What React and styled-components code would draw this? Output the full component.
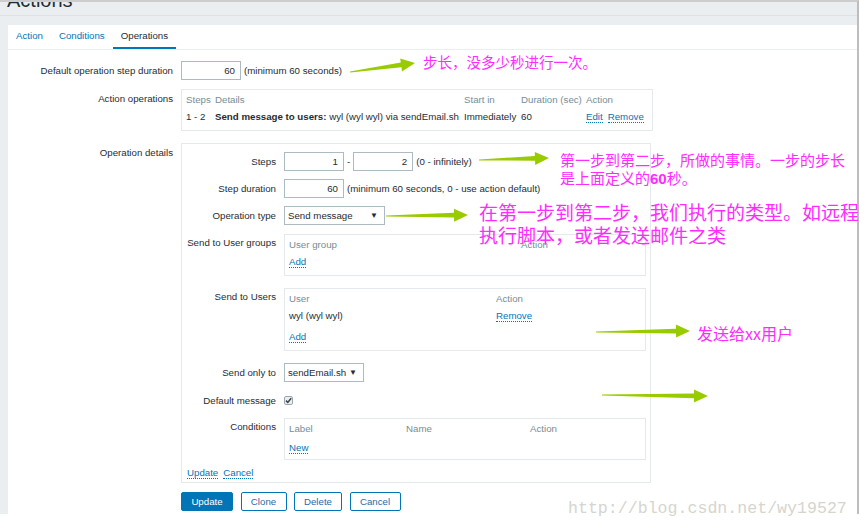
import React from "react";
import styled, { createGlobalStyle } from "styled-components";

const GlobalStyle = createGlobalStyle`
  html, body {
    margin: 0;
    padding: 0;
    background: #ffffff;
  }
  body {
    font-family: "Liberation Sans", Arial, sans-serif;
    font-size: 9.7px;
    color: #1f2c33;
  }
`;

const Frame = styled.div`
  position: relative;
  width: 859px;
  height: 529px;
  overflow: hidden;
`;

const Page = styled.div`
  box-sizing: border-box;
  width: 859px;
  height: 514px;
  background: #ebeef0;
  border-top: 2px solid #cdcdcd;
  border-right: 2px solid #bdbdbd;
  display: flex;
  flex-direction: column;
`;

const Header = styled.div`
  height: 13px;
  border-bottom: 1px solid #dde2e5;
  padding-left: 7px;
  overflow: hidden;
  margin-bottom: 9px;
`;

const Title = styled.h1`
  margin: -12px 0 0 0;
  font-size: 20px;
  line-height: 20px;
  font-weight: normal;
  color: #1f2c33;
`;

const Panel = styled.div`
  flex: 1;
  margin-left: 8px;
  background: #ffffff;
`;

const TabBar = styled.div`
  display: flex;
  height: 24px;
  border-bottom: 1px solid #ebeef0;
`;

const Tab = styled.div`
  padding: 0 8px;
  line-height: 22px;
  border-bottom: 2px solid ${(p) => (p.$active ? "#0275b8" : "transparent")};
  color: ${(p) => (p.$active ? "#1f2c33" : "#0275b8")};
`;

const Form = styled.div`
  padding-top: 11px;
  display: flex;
  flex-direction: column;
`;

const FormRow = styled.div`
  display: grid;
  grid-template-columns: ${(p) => p.$label || "165px"} 1fr;
  column-gap: 8px;
  margin-top: ${(p) => p.$mt || 0}px;
  align-items: start;
`;

const Label = styled.div`
  text-align: right;
  white-space: nowrap;
  line-height: ${(p) => (p.$box ? "14px" : "19px")};
  padding-top: ${(p) => (p.$box ? `${p.$top || 2}px` : "0")};
`;

const Field = styled.div`
  display: flex;
  align-items: center;
  gap: 3px;
  min-height: 19px;
`;

const TextInput = styled.div`
  box-sizing: border-box;
  width: ${(p) => p.$w || 60}px;
  height: 19px;
  border: 1px solid #acbbc2;
  background: #ffffff;
  text-align: right;
  padding-right: 5px;
  line-height: 17px;
`;

const Hint = styled.span`
  color: #1f2c33;
  white-space: nowrap;
`;

const Select = styled.div`
  box-sizing: border-box;
  width: ${(p) => p.$w}px;
  height: 19px;
  border: 1px solid #acbbc2;
  background: #ffffff;
  display: flex;
  align-items: center;
  justify-content: space-between;
  padding: 0 6px 0 3px;
  white-space: nowrap;

  span:last-child {
    font-size: 8px;
    color: #1f2c33;
  }
`;

const ListBox = styled.div`
  box-sizing: border-box;
  width: ${(p) => p.$w}px;
  border: 1px solid #e5e9eb;
  padding: ${(p) => p.$pad || "1px 4px 5px"};
`;

const ListGrid = styled.div`
  display: grid;
  grid-template-columns: ${(p) => p.$cols};
  grid-auto-rows: 17px;
  align-items: center;
  white-space: nowrap;
`;

const HeadCell = styled.div`
  color: #768d99;
`;

const Cell = styled.div`
  color: #1f2c33;

  b {
    font-weight: bold;
  }
`;

const LinkText = styled.span`
  color: #0275b8;
  border-bottom: 1px dotted #0275b8;
  line-height: 11px;
  display: inline-block;
  margin-right: ${(p) => p.$mr || 0}px;
`;

const ExtraRow = styled.div`
  height: 17px;
  display: flex;
  align-items: center;
  margin-top: ${(p) => p.$mt || 0}px;
`;

const DetailsBox = styled.div`
  box-sizing: border-box;
  width: 470px;
  border: 1px solid #e5e9eb;
  padding: 8px 5px 3px;
  display: flex;
  flex-direction: column;
`;

const FootLinks = styled.div`
  margin-top: 7px;
  line-height: 14px;
  display: flex;
  align-items: center;
`;

const Checkbox = styled.span`
  box-sizing: border-box;
  width: 9px;
  height: 9px;
  border: 1px solid #9aa7ae;
  border-radius: 2px;
  background: #eceeef;
  display: inline-flex;
  align-items: center;
  justify-content: center;
`;

const ButtonRow = styled.div`
  display: flex;
  gap: 7.5px;
`;

const Button = styled.div`
  box-sizing: border-box;
  width: ${(p) => p.$w}px;
  height: 19px;
  text-align: center;
  line-height: 17px;
  border: 1px solid #0275b8;
  border-radius: 2px;
  background: ${(p) => (p.$primary ? "#0275b8" : "#ffffff")};
  color: ${(p) => (p.$primary ? "#ffffff" : "#2a6aa5")};
`;

const Overlay = styled.div`
  position: absolute;
  inset: 0;
  pointer-events: none;
`;

const Note = styled.div`
  position: absolute;
  left: ${(p) => p.$x}px;
  top: ${(p) => p.$y}px;
  font-family: "Noto Sans CJK SC", "Liberation Sans", sans-serif;
  font-size: ${(p) => p.$size}px;
  line-height: ${(p) => p.$lh}px;
  color: #ff2bff;
  white-space: nowrap;

  b {
    font-family: "Liberation Sans", sans-serif;
    font-weight: bold;
  }
`;

const Watermark = styled.div`
  position: absolute;
  left: 568px;
  top: 499px;
  font-family: "Liberation Mono", monospace;
  font-size: 16.6px;
  line-height: 20px;
  color: #d5d5ce;
  white-space: nowrap;
`;

const arrows = [
  [350, 72, 415, 63],
  [479, 160, 549, 158],
  [386, 216, 468, 215],
  [596, 332, 690, 331],
  [602, 395, 708, 396],
];

function arrowPoints([x1, y1, x2, y2]) {
  const dx = x2 - x1;
  const dy = y2 - y1;
  const len = Math.hypot(dx, dy);
  const ux = dx / len;
  const uy = dy / len;
  const nx = -uy;
  const ny = ux;
  const head = 14;
  const bx = x2 - ux * head;
  const by = y2 - uy * head;
  const pts = [
    [x1 + nx * 0.4, y1 + ny * 0.4],
    [bx + nx * 2.4, by + ny * 2.4],
    [bx + nx * 6.5, by + ny * 6.5],
    [x2, y2],
    [bx - nx * 6.5, by - ny * 6.5],
    [bx - nx * 2.4, by - ny * 2.4],
    [x1 - nx * 0.4, y1 - ny * 0.4],
  ];
  return pts.map((p) => p.map((v) => v.toFixed(1)).join(",")).join(" ");
}

function Arrows() {
  return (
    <svg width="859" height="529" style={{ position: "absolute", left: 0, top: 0 }}>
      {arrows.map((a, i) => (
        <polygon key={i} points={arrowPoints(a)} fill="#99cc00" />
      ))}
    </svg>
  );
}

function App() {
  return (
    <Frame>
      <GlobalStyle />
      <Page>
        <Header>
          <Title>Actions</Title>
        </Header>
        <Panel>
          <TabBar>
            <Tab>Action</Tab>
            <Tab>Conditions</Tab>
            <Tab $active>Operations</Tab>
          </TabBar>

          <Form>
            <FormRow>
              <Label>Default operation step duration</Label>
              <Field>
                <TextInput>60</TextInput>
                <Hint>(minimum 60 seconds)</Hint>
              </Field>
            </FormRow>

            <FormRow $mt={9}>
              <Label $box $top={3}>Action operations</Label>
              <ListBox $w={472}>
                <ListGrid $cols="29px 249px 57px 65px auto">
                  <HeadCell>Steps</HeadCell>
                  <HeadCell>Details</HeadCell>
                  <HeadCell>Start in</HeadCell>
                  <HeadCell>Duration (sec)</HeadCell>
                  <HeadCell>Action</HeadCell>
                  <Cell>1 - 2</Cell>
                  <Cell>
                    <b>Send message to users:</b> wyl (wyl wyl) via sendEmail.sh
                  </Cell>
                  <Cell>Immediately</Cell>
                  <Cell>60</Cell>
                  <Cell>
                    <LinkText $mr={5}>Edit</LinkText>
                    <LinkText>Remove</LinkText>
                  </Cell>
                </ListGrid>
              </ListBox>
            </FormRow>

            <FormRow $mt={12}>
              <Label $box $top={3}>Operation details</Label>
              <DetailsBox>
                <FormRow $label="89px">
                  <Label>Steps</Label>
                  <Field>
                    <TextInput>1</TextInput>
                    <Hint>-</Hint>
                    <TextInput>2</TextInput>
                    <Hint>(0 - infinitely)</Hint>
                  </Field>
                </FormRow>

                <FormRow $label="89px" $mt={8}>
                  <Label>Step duration</Label>
                  <Field>
                    <TextInput>60</TextInput>
                    <Hint>(minimum 60 seconds, 0 - use action default)</Hint>
                  </Field>
                </FormRow>

                <FormRow $label="89px" $mt={8}>
                  <Label>Operation type</Label>
                  <Field>
                    <Select $w={101}>
                      <span>Send message</span>
                      <span>▼</span>
                    </Select>
                  </Field>
                </FormRow>

                <FormRow $label="89px" $mt={9}>
                  <Label $box>Send to User groups</Label>
                  <ListBox $w={362}>
                    <ListGrid $cols="232px auto">
                      <HeadCell>User group</HeadCell>
                      <HeadCell>Action</HeadCell>
                    </ListGrid>
                    <ExtraRow>
                      <LinkText>Add</LinkText>
                    </ExtraRow>
                  </ListBox>
                </FormRow>

                <FormRow $label="89px" $mt={12}>
                  <Label $box>Send to Users</Label>
                  <ListBox $w={362}>
                    <ListGrid $cols="207px auto">
                      <HeadCell>User</HeadCell>
                      <HeadCell>Action</HeadCell>
                      <Cell>wyl (wyl wyl)</Cell>
                      <Cell>
                        <LinkText>Remove</LinkText>
                      </Cell>
                    </ListGrid>
                    <ExtraRow $mt={4}>
                      <LinkText>Add</LinkText>
                    </ExtraRow>
                  </ListBox>
                </FormRow>

                <FormRow $label="89px" $mt={12}>
                  <Label>Send only to</Label>
                  <Field>
                    <Select $w={80}>
                      <span>sendEmail.sh</span>
                      <span>▼</span>
                    </Select>
                  </Field>
                </FormRow>

                <FormRow $label="89px" $mt={9}>
                  <Label>Default message</Label>
                  <Field>
                    <Checkbox>
                      <svg width="7" height="7" viewBox="0 0 7 7">
                        <path d="M1 3.6 L2.8 5.4 L6.2 1.2" fill="none" stroke="#3a4247" strokeWidth="1.5" />
                      </svg>
                    </Checkbox>
                  </Field>
                </FormRow>

                <FormRow $label="89px" $mt={8}>
                  <Label $box>Conditions</Label>
                  <ListBox $w={362} $pad="1px 4px 3px">
                    <ListGrid $cols="117px 124px auto">
                      <HeadCell>Label</HeadCell>
                      <HeadCell>Name</HeadCell>
                      <HeadCell>Action</HeadCell>
                    </ListGrid>
                    <ExtraRow $mt={2}>
                      <LinkText>New</LinkText>
                    </ExtraRow>
                  </ListBox>
                </FormRow>

                <FootLinks>
                  <LinkText $mr={5}>Update</LinkText>
                  <LinkText>Cancel</LinkText>
                </FootLinks>
              </DetailsBox>
            </FormRow>

            <FormRow $mt={9}>
              <span />
              <ButtonRow>
                <Button $primary $w={52}>Update</Button>
                <Button $w={46}>Clone</Button>
                <Button $w={48}>Delete</Button>
                <Button $w={51}>Cancel</Button>
              </ButtonRow>
            </FormRow>
          </Form>
        </Panel>
      </Page>

      <Overlay>
        <Arrows />
        <Note $x={423} $y={54} $size={14.5} $lh={16}>
          步长，没多少秒进行一次。
        </Note>
        <Note $x={560} $y={151} $size={15} $lh={18}>
          第一步到第二步，所做的事情。一步的步长
          <br />
          是上面定义的<b>60</b>秒。
        </Note>
        <Note $x={479} $y={200} $size={19} $lh={23}>
          在第一步到第二步，我们执行的类型。如远程
          <br />
          执行脚本，或者发送邮件之类
        </Note>
        <Note $x={697} $y={324} $size={16} $lh={18}>
          发送给xx用户
        </Note>
        <Watermark>http://blog.csdn.net/wy19527</Watermark>
      </Overlay>
    </Frame>
  );
}

export default App;
